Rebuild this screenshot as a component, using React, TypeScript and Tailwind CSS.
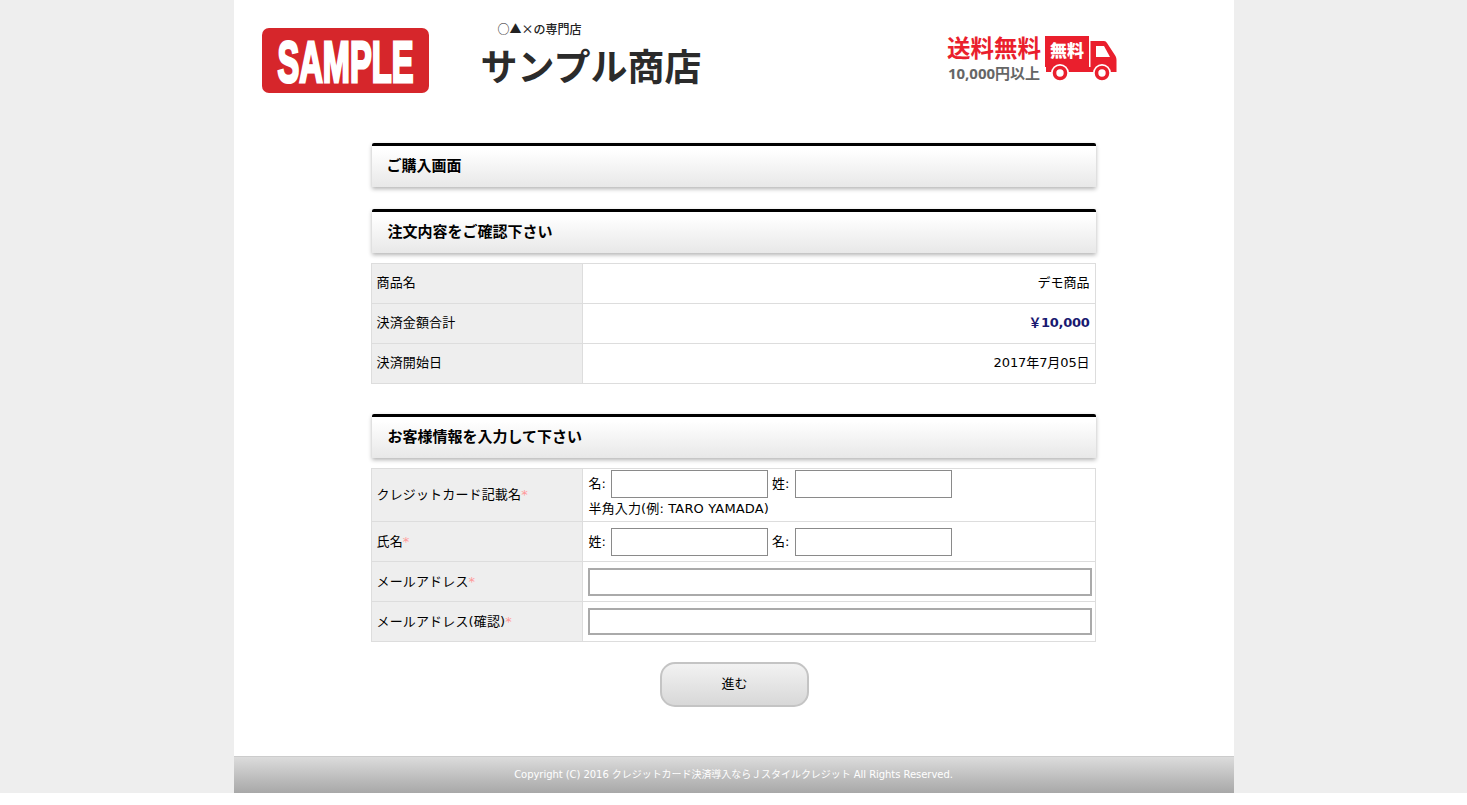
const font = { fontFamily: '"DejaVu Sans","Noto Sans CJK JP",sans-serif' };

function Heading({ children, className }: { children: React.ReactNode; className: string }) {
  return (
    <h2 className={`h-[44px] w-[724px] ml-[1px] pb-[2px] border-t-[3px] border-black rounded-t-[2px] bg-gradient-to-b from-white from-10% to-[#e8e8e8] shadow-[0_2px_4px_rgba(0,0,0,0.3)] flex items-center text-[15px] font-bold text-black ${className}`}>
      {children}
    </h2>
  );
}

function Th({ children, className = '' }: { children: React.ReactNode; className?: string }) {
  return <td className={`w-[211px] bg-[#eeeeee] border border-[#dddddd] px-[5px] align-middle tracking-[0.15px] ${className}`}>{children}</td>;
}

function Req() {
  return <span className="text-[#ff9999]">*</span>;
}

function Txt({ className }: { className: string }) {
  return <input type="text" className={`h-[28px] bg-white border border-[#8a8a8a] ${className}`} />;
}

function Truck() {
  return (
    <svg width="74" height="46" viewBox="0 0 74 46" className="block">
      <rect x="0" y="0" width="44" height="31" fill="#ea1f2d" />
      <text x="22" y="21" textAnchor="middle" fontSize="17" fontWeight="900" fill="#fff" fontFamily="'Noto Sans CJK JP',sans-serif">無料</text>
      <path d="M45.5 5h13.5q2 0 3 2l8.5 13q1 2 1 4v12H45.5z" fill="#ea1f2d" />
      <path d="M51 10h8l6 11H51z" fill="#fff" />
      <rect x="1" y="31" width="70" height="5" fill="#ea1f2d" />
      <circle cx="15" cy="37" r="9" fill="#fff" />
      <circle cx="15" cy="37" r="5.5" fill="none" stroke="#ea1f2d" strokeWidth="3.6" />
      <circle cx="57" cy="37" r="9" fill="#fff" />
      <circle cx="57" cy="37" r="5.5" fill="none" stroke="#ea1f2d" strokeWidth="3.6" />
    </svg>
  );
}

function Logo() {
  return (
    <svg width="167" height="65" viewBox="0 0 167 65" className="block">
      <rect x="0" y="0" width="167" height="65" rx="7" fill="#d6262b" />
      <text x="83.5" y="53.5" textAnchor="middle" textLength="136" lengthAdjust="spacingAndGlyphs" fontSize="58" fontWeight="700" fill="#fff" stroke="#fff" strokeWidth="3" fontFamily="'Liberation Sans',sans-serif">SAMPLE</text>
    </svg>
  );
}

export default function App() {
  return (
    <div className="bg-[#eeeeee] h-[793px] overflow-hidden text-[13px] leading-[20px] text-black" style={font}>
      <div className="w-[1000px] h-full mx-auto bg-white flex flex-col">
        <header className="h-[143px] flex shrink-0 items-start">
          <div className="ml-[28px] mt-[28px]"><Logo /></div>
          <div className="ml-[52px] mt-[19px] w-[260px]">
            <p className="ml-[17px] text-[12px] leading-[20px] font-medium text-[#222]" style={{ fontFamily: '"Noto Sans CJK JP",sans-serif' }}>○▲×の専門店</p>
            <p className="mt-[4px] text-[37px] leading-[44px] font-bold text-[#2b2b2b]" style={{ fontFamily: '"Noto Sans CJK JP",sans-serif' }}>サンプル商店</p>
          </div>
          <div className="ml-[207px] mt-[33px] w-[93px] text-center">
            <p className="text-[23.5px] leading-[28px] font-bold text-[#ea1f2d] whitespace-nowrap -mx-2" style={{ fontFamily: '"Noto Sans CJK JP",sans-serif' }}>送料無料</p>
            <p className="mt-[1px] text-[15px] leading-[22px] font-bold text-[#666] whitespace-nowrap -mx-2" style={{ fontFamily: '"Noto Sans","Noto Sans CJK JP",sans-serif' }}>10,000円以上</p>
          </div>
          <div className="ml-[4px] mt-[36px]"><Truck /></div>
        </header>

        <main className="w-[725px] ml-[137px] flex-1">
          <Heading className="pl-[15px]">ご購入画面</Heading>
          <Heading className="mt-[22px] pl-[16px]">注文内容をご確認下さい</Heading>
          <table className="mt-[10px] w-full border-collapse table-fixed">
            <tbody>
              <tr className="h-[40px]"><Th className="pb-[2px]">商品名</Th><td className="border border-[#dddddd] px-[5px] pb-[2px] text-right">デモ商品</td></tr>
              <tr className="h-[40px]"><Th className="pb-[2px]">決済金額合計</Th><td className="border border-[#dddddd] px-[5px] pb-[2px] text-right font-bold text-[#191970] tracking-[-0.3px]">￥10,000</td></tr>
              <tr className="h-[40px]"><Th className="pb-[2px]">決済開始日</Th><td className="border border-[#dddddd] px-[5px] pb-[2px] text-right tracking-[-0.1px]">2017年7月05日</td></tr>
            </tbody>
          </table>
          <Heading className="mt-[30px] pl-[16px]">お客様情報を入力して下さい</Heading>
          <table className="mt-[10px] w-full border-collapse table-fixed">
            <tbody>
              <tr className="h-[53px]">
                <Th>クレジットカード記載名<Req /></Th>
                <td className="border border-[#dddddd] pl-[6px] pr-[5px] pt-[1px] align-top">
                  <div className="flex items-center gap-[5px]">名: <Txt className="w-[157px]" /><span className="-ml-px mr-px">姓:</span> <Txt className="w-[157px]" /></div>
                  <div className="mt-[1px] leading-[20px] tracking-[0.15px]">半角入力(例: TARO YAMADA)</div>
                </td>
              </tr>
              <tr className="h-[40px]">
                <Th>氏名<Req /></Th>
                <td className="border border-[#dddddd] pl-[6px] pr-[5px]">
                  <div className="flex items-center gap-[5px]">姓: <Txt className="w-[157px]" /><span className="-ml-px mr-px">名:</span> <Txt className="w-[157px]" /></div>
                </td>
              </tr>
              <tr className="h-[40px]">
                <Th>メールアドレス<Req /></Th>
                <td className="border border-[#dddddd] px-[5px]"><input type="text" className="block w-[504px] h-[28px] bg-white border-2 border-[#aaaaaa]" /></td>
              </tr>
              <tr className="h-[40px]">
                <Th>メールアドレス(確認)<Req /></Th>
                <td className="border border-[#dddddd] px-[5px]"><input type="text" className="block w-[504px] h-[27px] bg-white border-2 border-[#aaaaaa]" /></td>
              </tr>
            </tbody>
          </table>
          <div className="mt-[20px] flex justify-center">
            <button type="button" className="w-[149px] h-[45px] ml-[3px] pb-[2px] rounded-[15px] border-2 border-[#c4c4c4] bg-gradient-to-b from-[#f2f2f2] to-[#d8d8d8] text-[13px] text-black">進む</button>
          </div>
        </main>

        <footer className="h-[37px] shrink-0 border-t border-[#cccccc] bg-gradient-to-b from-[#dcdcdc] to-[#a8a8a8] text-center text-[10px] leading-[35px] text-white tracking-[-0.05px]">
          Copyright (C) 2016 クレジットカード決済導入ならＪスタイルクレジット All Rights Reserved.
        </footer>
      </div>
    </div>
  );
}
